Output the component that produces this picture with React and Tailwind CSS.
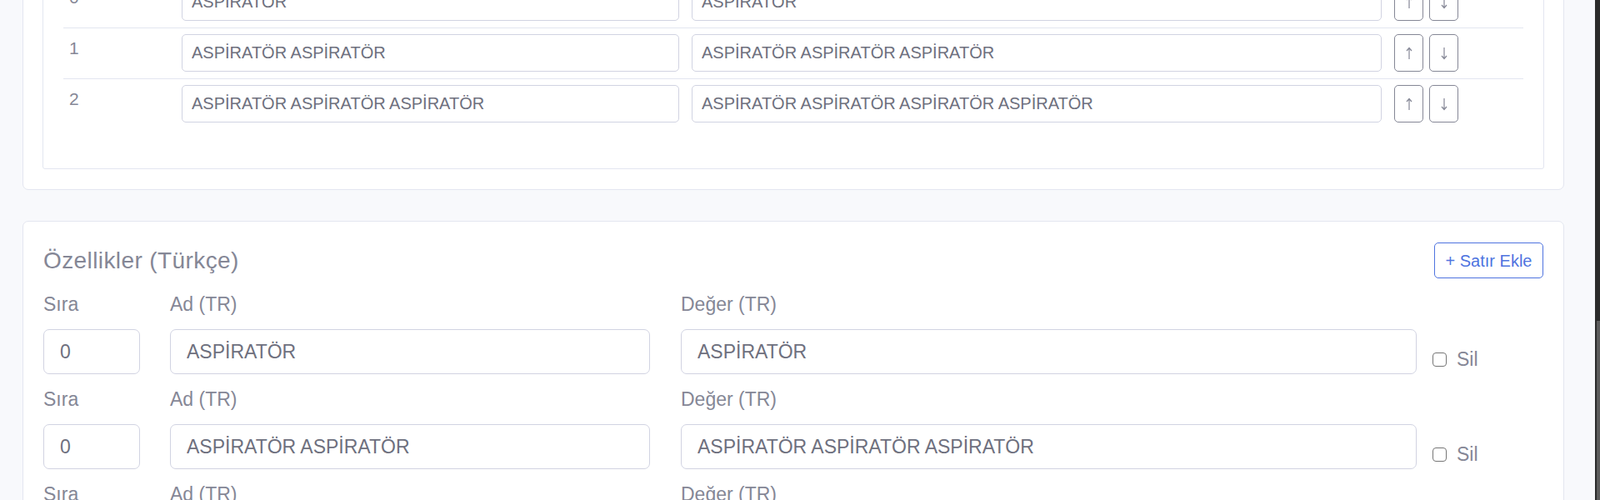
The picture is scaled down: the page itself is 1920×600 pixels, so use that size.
import React from 'react';

const tableRows = [
  { idx: 0, name: 'ASPİRATÖR', value: 'ASPİRATÖR' },
  { idx: 1, name: 'ASPİRATÖR ASPİRATÖR', value: 'ASPİRATÖR ASPİRATÖR ASPİRATÖR' },
  { idx: 2, name: 'ASPİRATÖR ASPİRATÖR ASPİRATÖR', value: 'ASPİRATÖR ASPİRATÖR ASPİRATÖR ASPİRATÖR' },
];

const features = [
  { order: 0, name: 'ASPİRATÖR', value: 'ASPİRATÖR' },
  { order: 0, name: 'ASPİRATÖR ASPİRATÖR', value: 'ASPİRATÖR ASPİRATÖR ASPİRATÖR' },
  { order: 0, name: 'ASPİRATÖR ASPİRATÖR ASPİRATÖR', value: 'ASPİRATÖR ASPİRATÖR ASPİRATÖR ASPİRATÖR' },
];

function Arrow({ down }) {
  return (
    <svg width="8" height="16" viewBox="0 0 8 16" fill="none" stroke="#858796" strokeWidth="1.2">
      {down ? (
        <path d="M4 1v13.5M1 11l3 3.5 3-3.5" />
      ) : (
        <path d="M4 15V1.5M1 5l3-3.5 3 3.5" />
      )}
    </svg>
  );
}

function SmallInput({ value, width }) {
  return (
    <input
      readOnly
      value={value}
      className={`block ${width} h-[45px] rounded-[5px] border border-[#d1d3e2] bg-white pl-[11px] text-[20px] text-[#6e707e] outline-none`}
    />
  );
}

function TableRow({ row }) {
  return (
    <div className="flex items-start border-t border-[#e3e6f0] pt-[7px] pb-[8px]">
      <div className="w-[142px] pl-[7px] pt-[2px] text-[21px] leading-[30px] text-[#858796]">{row.idx}</div>
      <SmallInput value={row.name} width="w-[597px]" />
      <div className="ml-[15px]">
        <SmallInput value={row.value} width="w-[828px]" />
      </div>
      <div className="ml-[15px] flex gap-[7px]">
        <button className="flex h-[45px] w-[35px] items-center justify-center rounded-[5px] border border-[#858796] bg-white">
          <Arrow />
        </button>
        <button className="flex h-[45px] w-[35px] items-center justify-center rounded-[5px] border border-[#858796] bg-white">
          <Arrow down />
        </button>
      </div>
    </div>
  );
}

function Field({ label, value, width, className = '' }) {
  return (
    <div className={`${width} ${className}`}>
      <div className="mb-[15px] h-[30px] text-[23px] leading-[30px] text-[#858796]">{label}</div>
      <input
        readOnly
        value={value}
        className="block h-[54px] w-full rounded-[7px] border border-[#d1d3e2] bg-white pl-[19px] text-[23px] text-[#6e707e] outline-none"
      />
    </div>
  );
}

function FeatureRow({ item }) {
  return (
    <div className="mb-[15px] flex">
      <Field label="Sıra" value={item.order} width="w-[116px]" />
      <Field label="Ad (TR)" value={item.name} width="w-[576px]" className="ml-[36px]" />
      <Field label="Değer (TR)" value={item.value} width="w-[883px]" className="ml-[37px]" />
      <div className="ml-[19px] flex items-end pb-[3px]">
        <label className="flex h-[30px] items-center gap-[12px] text-[23px] text-[#858796]">
          <span className="block h-[17px] w-[17px] shrink-0 rounded-[4px] border-[1.5px] border-[#767676] bg-white" />
          Sil
        </label>
      </div>
    </div>
  );
}

export default function App() {
  return (
    <div className="flex h-screen overflow-hidden bg-[#f8f9fc] font-['Liberation_Sans',Arial,sans-serif]">
      <main className="flex-1 overflow-hidden pl-[27px] pr-[37px]">
        <div className="-mt-[77px]">
          {/* Sıralama tablosu */}
          <section className="rounded-[7px] border border-[#e3e6f0] bg-white px-[23px] pt-[23px] pb-[24px]">
            <div className="rounded-[3px] border border-[#e3e6f0] px-[24px] pt-[24px] pb-[47px]">
              {tableRows.map((row) => (
                <TableRow key={row.idx} row={row} />
              ))}
            </div>
          </section>

          {/* Özellikler */}
          <section className="mt-[37px] rounded-[7px] border border-[#e3e6f0] bg-white px-[24px] pt-[25px] pb-[24px]">
            <div className="mb-[16px] flex h-[43px] items-center justify-between">
              <h5 className="text-[28px] tracking-[0.4px] text-[#858796]">Özellikler (Türkçe)</h5>
              <button className="flex h-[43px] w-[131px] items-center justify-center rounded-[5px] border border-[#4e73df] text-[20px] text-[#4e73df]">
                + Satır Ekle
              </button>
            </div>
            {features.map((item, i) => (
              <FeatureRow key={i} item={item} />
            ))}
          </section>
        </div>
      </main>
      <div className="flex w-[6px] flex-col bg-[#2b2b2b]">
        <div className="h-[385px]" />
        <div className="ml-[2px] flex-1 bg-[#5c5c5c]" />
      </div>
    </div>
  );
}
